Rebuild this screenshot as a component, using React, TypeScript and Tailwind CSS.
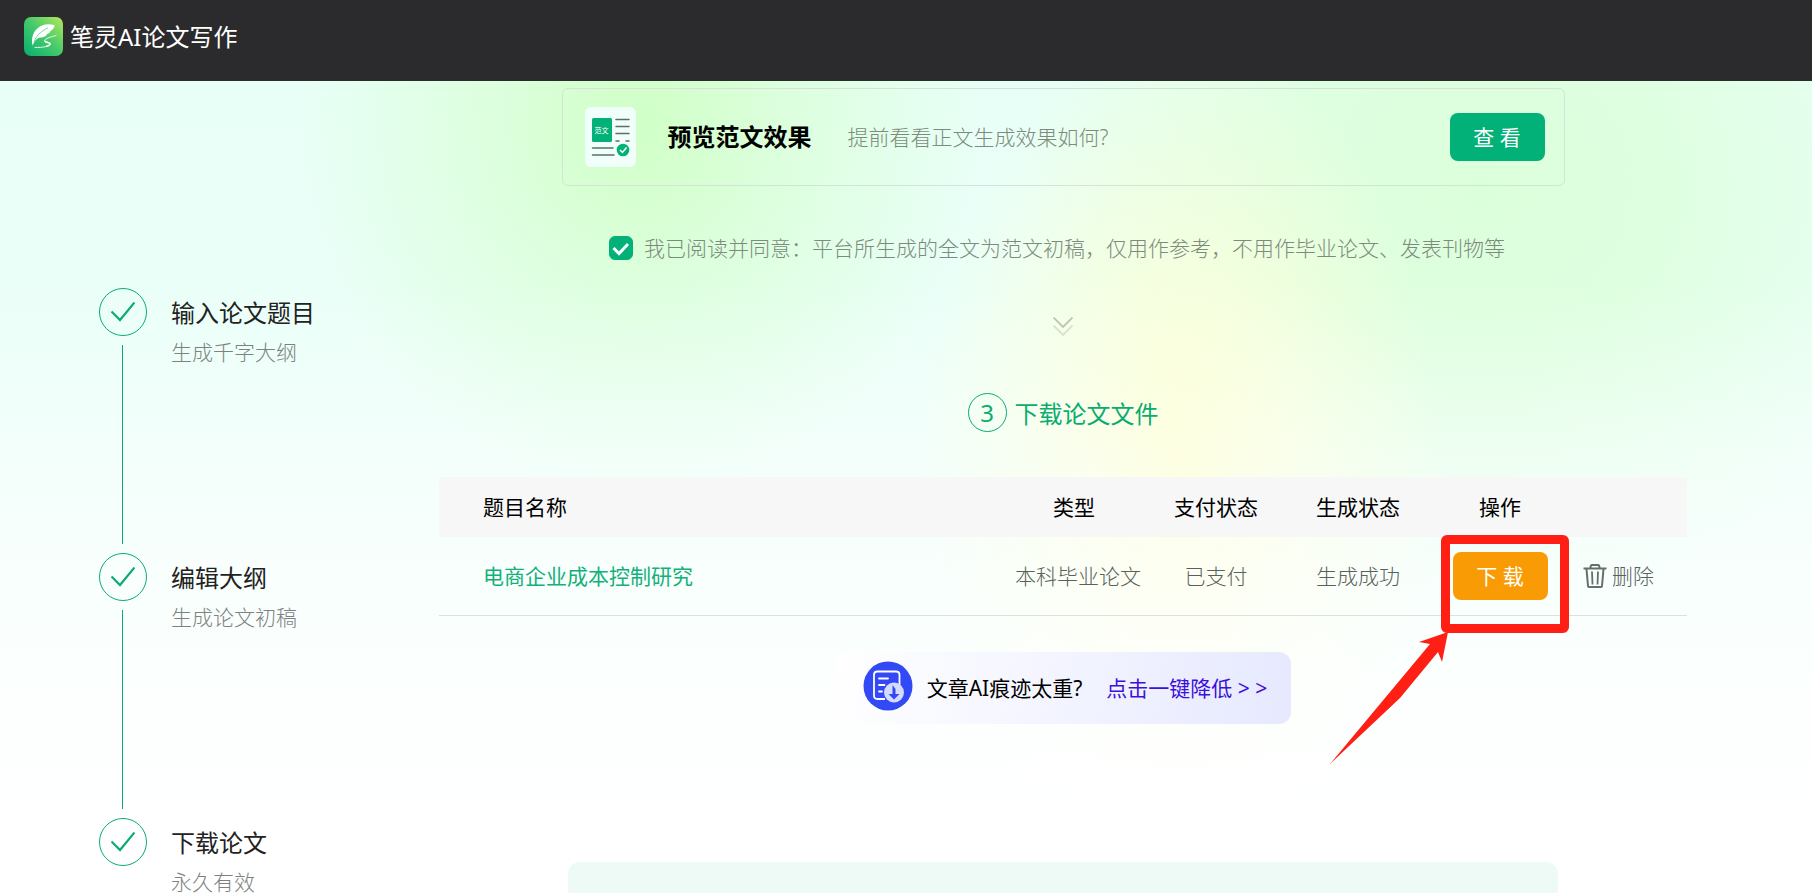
import React, { useState } from 'react';

const steps = [
  { title: '输入论文题目', desc: '生成千字大纲' },
  { title: '编辑大纲', desc: '生成论文初稿' },
  { title: '下载论文', desc: '永久有效' },
];

const papers = [
  { title: '电商企业成本控制研究', type: '本科毕业论文', pay: '已支付', status: '生成成功' },
];

function Logo() {
  return (
    <svg viewBox="0 0 39 39" className="size-[39px] shrink-0" aria-hidden="true">
      <defs>
        <linearGradient id="logo" x1="0" y1="1" x2="1" y2="0">
          <stop offset="0" stopColor="#06ae72" />
          <stop offset="0.5" stopColor="#43c96b" />
          <stop offset="1" stopColor="#b5e85c" />
        </linearGradient>
      </defs>
      <rect width="39" height="39" rx="7" fill="url(#logo)" />
      <path
        d="M8.500 28.500C7 21 9 15 14 11C18 7.500 23 6.500 30.500 8C31 10.500 28 13 26 14.500C27 15 24 17 22.500 17.500C23 18.500 20 20.500 16.500 20.500C13 21 10.500 24 8.500 28.500Z"
        fill="#fff"
      />
      <path d="M10 25C12 19 17 14 24 11" stroke="#5bcf76" strokeWidth="0.8" fill="none" />
      <path
        d="M32 18.500C27 20 20.500 21.500 20.500 24C20.500 26 26.500 25.500 26 27.500C25.500 29.500 19 30.500 11 30.500"
        stroke="#e6f9e4"
        strokeWidth="1"
        fill="none"
        strokeLinecap="round"
      />
      <path d="M21 24C22 25.500 27 25.500 26 27.500C25.500 28.500 24 29 22 29.500" stroke="#fff" strokeWidth="1.500" fill="none" />
    </svg>
  );
}

function SampleIcon() {
  return (
    <div className="grid h-[60px] w-[51px] shrink-0 rounded-md bg-[#f0fff9] *:col-start-1 *:row-start-1">
      <svg viewBox="0 0 51 60" className="h-[60px] w-[51px]" aria-hidden="true">
        <rect x="7" y="11" width="20" height="24" rx="1.500" fill="#02b177" />
        <g stroke="#5b6f69" strokeWidth="1.500" strokeLinecap="round">
          <path d="M31 12.500H44M31 19.500H44M31 26.500H44M31 34H34M41 34H44" />
          <path d="M7.500 41H28M7.500 48H29" />
        </g>
        <circle cx="38" cy="43" r="6.300" fill="#02b177" />
        <path d="M35 43L37.500 45.500L41.500 40.500" stroke="#fff" strokeWidth="1.500" fill="none" />
      </svg>
      <span className="ml-[7px] mt-[11px] flex h-6 w-5 items-center justify-center text-[7px] leading-none text-white">
        范文
      </span>
    </div>
  );
}

function TrashIcon() {
  return (
    <svg viewBox="0 0 24 24" className="size-6 shrink-0" fill="none" stroke="#66706a" strokeWidth="2" aria-hidden="true">
      <path d="M0.500 4.500H23.500" />
      <path d="M7.500 4C7.500 1.500 8 1 9 1H15C16 1 16.500 1.500 16.500 4" />
      <path d="M3.500 5L5 22C5 22.700 5.500 23 6 23H18C18.500 23 19 22.700 19 22L20.500 5" />
      <path d="M9 7.500L9.500 20.500M15 7.500L14.500 20.500" strokeWidth="1.800" />
    </svg>
  );
}

function ReduceIcon() {
  return (
    <svg viewBox="0 0 50 50" className="mb-1 size-[50px] shrink-0" fill="none" aria-hidden="true">
      <circle cx="25" cy="25" r="24.500" fill="#3349f5" />
      <path
        d="M22 38H14.500C12.500 38 11 36.500 11 34.500V14C11 12 12.500 10.500 14.500 10.500H33C35 10.500 36.500 12 36.500 14V24"
        stroke="#fff"
        strokeWidth="1.800"
      />
      <path d="M16 17.500H25M16 24H21.500M16 30.500H19" stroke="#fff" strokeWidth="1.800" strokeLinecap="round" />
      <circle cx="31" cy="31.500" r="10" fill="#d5dbff" />
      <path d="M29.500 24V33L25.500 33L31 38.500L36.500 33H32.500V28Z" fill="#3349f5" />
    </svg>
  );
}

// red frame and arrow pointing out the download button
function Highlight() {
  return (
    <>
      <span className="pointer-events-none absolute -left-3 -top-[17px] h-[98px] w-32 rounded-md border-[9px] border-[#ff1f14]" />
      <svg
        viewBox="0 0 120 134"
        className="pointer-events-none absolute -left-[123px] top-20 h-[134px] w-[120px]"
        aria-hidden="true"
      >
        <path d="M118 0L89 10L100 12L60 60L0 132L70 66L108 20L112 30Z" fill="#ff1f14" />
      </svg>
    </>
  );
}

export default function App() {
  const [agreed, setAgreed] = useState(true);

  return (
    <div className="flex h-screen flex-col overflow-hidden bg-white font-['Noto_Sans','Noto_Sans_CJK_SC',sans-serif] text-[21px] leading-8">
      <header className="flex h-[81px] shrink-0 items-start bg-[#2b2b2d] px-6 pt-[17px]">
        <a href="#" className="flex items-center gap-[7px] text-2xl leading-[39px] text-white">
          <Logo />
          笔灵AI论文写作
        </a>
      </header>

      <div className="flex min-h-0 flex-1 bg-[linear-gradient(180deg,#ffffff00_0%,#ffffff00_25%,#ffffffa0_60%,#fff_92%),radial-gradient(ellipse_340px_380px_at_640px_40px,#d0ffc6_0%,#d4ffcca0_40%,#d8ffd200_100%),radial-gradient(ellipse_260px_420px_at_1180px_380px,#fdffd0_0%,#fdffd8b0_40%,#fdffdc00_100%),radial-gradient(ellipse_460px_420px_at_1480px_110px,#dcffdb_0%,#dcffdbd0_40%,#dcffdb00_100%),linear-gradient(180deg,#e8fff7,#f0fffa)]">
        <aside className="w-[439px] shrink-0 pl-[98px] pt-[207px]">
          <ol>
            {steps.map((step, i) => (
              <li key={step.title} className="flex h-[265px] gap-6">
                <div className="flex w-[49px] shrink-0 flex-col items-center">
                  <span className="flex size-12 shrink-0 items-center justify-center rounded-full border border-[#0bac72]">
                    <svg viewBox="0 0 24 20" className="h-5 w-6" fill="none" aria-hidden="true">
                      <path d="M0.500 9.500L9 18L23.500 0.500" stroke="#0bac72" strokeWidth="2.200" />
                    </svg>
                  </span>
                  {i < steps.length - 1 && <span className="my-[9px] w-px flex-1 bg-[#0bac72]" />}
                </div>
                <div className="pt-1">
                  <h3 className="text-2xl leading-[42px] text-[#222]">{step.title}</h3>
                  <p className="leading-[37px] font-light text-[#7d827f]">{step.desc}</p>
                </div>
              </li>
            ))}
          </ol>
        </aside>

        <main className="flex min-w-0 flex-1 flex-col items-center pr-[125px] pt-[7px]">
          <section className="flex h-[98px] w-full max-w-[1003px] shrink-0 items-center rounded-md border border-[#d3e3d5] pl-[22px] pr-[19px]">
            <SampleIcon />
            <h2 className="ml-8 text-2xl font-bold text-black">预览范文效果</h2>
            <p className="ml-9 font-light text-[#7d8b7d]">提前看看正文生成效果如何?</p>
            <button type="button" className="ml-auto h-12 w-[95px] rounded-lg bg-[#02b177] text-white">
              查 看
            </button>
          </section>

          <label className="mt-[46px] flex shrink-0 items-center gap-[11px] pr-3 font-light text-[#7d8b7d]">
            <span className="grid size-6 *:col-start-1 *:row-start-1">
              <input
                type="checkbox"
                checked={agreed}
                onChange={(e) => setAgreed(e.target.checked)}
                className="size-6 appearance-none rounded-md border border-[#02b177] checked:bg-[#02b177]"
              />
              {agreed && (
                <svg viewBox="0 0 24 24" className="pointer-events-none size-6" fill="none" aria-hidden="true">
                  <path d="M4.500 12L10 17.500L19 8" stroke="#fff" strokeWidth="3" />
                </svg>
              )}
            </span>
            我已阅读并同意：平台所生成的全文为范文初稿，仅用作参考，不用作毕业论文、发表刊物等
          </label>

          <svg viewBox="0 0 20 20" className="mt-[53px] size-5 shrink-0" fill="none" strokeWidth="1.800" aria-hidden="true">
            <path d="M0.500 0.500L10 10L19.500 0.500" stroke="#bcc5b4" />
            <path d="M0.500 8.500L10 18L19.500 8.500" stroke="#d9e1d0" />
          </svg>

          <h2 className="mt-14 flex shrink-0 items-center gap-2 text-2xl leading-[39px] text-[#0bac72]">
            <span className="flex size-[39px] items-center justify-center rounded-full border border-[#0bac72]">3</span>
            <span className="pt-[3px] leading-9">下载论文文件</span>
          </h2>

          <table className="mt-[45px] w-full table-fixed">
            <colgroup>
              <col />
              <col className="w-[142px]" />
              <col className="w-[142px]" />
              <col className="w-[142px]" />
              <col className="w-[142px]" />
              <col className="w-[116px]" />
            </colgroup>
            <thead>
              <tr className="h-[60px] bg-[#f7f7f7] text-black *:font-normal">
                <th className="pl-11 text-left">题目名称</th>
                <th>类型</th>
                <th>支付状态</th>
                <th>生成状态</th>
                <th>操作</th>
                <td />
              </tr>
            </thead>
            <tbody>
              {papers.map((paper) => (
                <tr key={paper.title} className="h-[78px] border-b border-[#dbe3df] text-center font-light text-[#59615c]">
                  <td className="pl-11 text-left font-normal">
                    <a href="#" className="text-[#14b07a]">{paper.title}</a>
                  </td>
                  <td className="pl-2">{paper.type}</td>
                  <td>{paper.pay}</td>
                  <td>{paper.status}</td>
                  <td>
                    <div className="relative mx-auto h-12 w-[95px]">
                      <button type="button" className="h-12 w-[95px] rounded-lg bg-[#f99b04] font-normal text-white">
                        下 载
                      </button>
                      <Highlight />
                    </div>
                  </td>
                  <td>
                    <button type="button" className="ml-3 flex items-center gap-[5px]">
                      <TrashIcon />
                      删除
                    </button>
                  </td>
                </tr>
              ))}
            </tbody>
          </table>

          <div className="mt-9 flex h-[72px] shrink-0 items-center rounded-xl bg-[linear-gradient(100deg,#fff,#e6e9ff)] pl-7 pr-6">
            <ReduceIcon />
            <p className="ml-3.5 text-black">文章AI痕迹太重?</p>
            <a href="#" className="ml-6 text-[#3c10d8]">
              点击一键降低 &gt; &gt;
            </a>
          </div>

          <section className="mt-[138px] h-60 w-full max-w-[990px] shrink-0 rounded-xl bg-[#eefaf5]" />
        </main>
      </div>
    </div>
  );
}
